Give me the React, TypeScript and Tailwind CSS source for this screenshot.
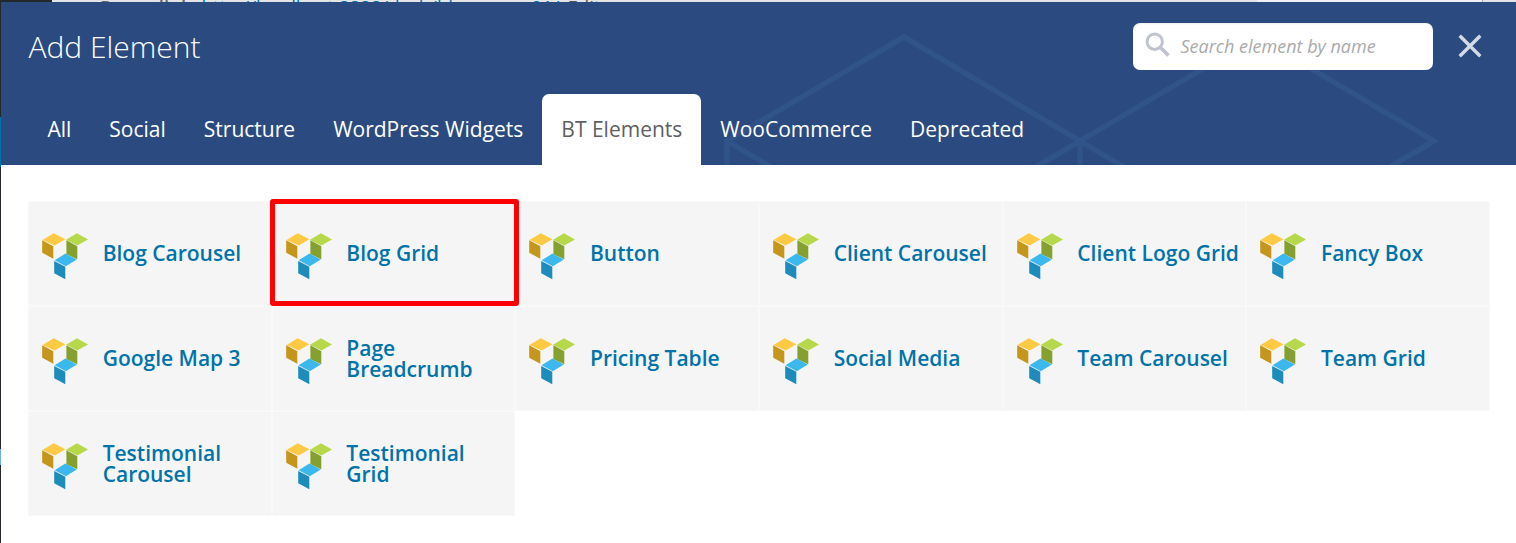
const names = [
  'Blog Carousel', 'Blog Grid', 'Button', 'Client Carousel', 'Client Logo Grid', 'Fancy Box',
  'Google Map 3', 'Page Breadcrumb', 'Pricing Table', 'Social Media', 'Team Carousel', 'Team Grid',
  'Testimonial Carousel', 'Testimonial Grid',
];

const tabs = ['All', 'Social', 'Structure', 'WordPress Widgets', 'BT Elements', 'WooCommerce', 'Deprecated'];

function Cubes() {
  return (
    <svg className="h-[48px] w-[48px] shrink-0" viewBox="0 0 48 48">
      <path fill="#ffca43" d="M12.7 1.3 24.4 7.3 13.7 13.6 1.5 7.9Z" />
      <path fill="#c4961b" d="M1.2 8.2 12.3 14.2V26.7L1.2 20.7Z" />
      <path fill="#b6d84a" d="M36 1.3 47 7.4 36.3 13.6 25.1 7.7Z" />
      <path fill="#85a02f" d="M25.4 8.3 36.3 14.2V27.3L25.4 22.3Z" />
      <path fill="#3bb8ee" d="M24.4 21.6 35.8 27.6 24.8 34.2 13.6 28.3Z" />
      <path fill="#1e8cba" d="M13.2 28.9 24.3 34.8V47.3L13.2 41.2Z" />
    </svg>
  );
}

export default function App() {
  return (
    <div className="relative h-[543px] w-[1516px] overflow-hidden bg-white pl-px font-['Open_Sans',sans-serif]">
      <div className="absolute left-0 top-0 flex h-[543px] w-px flex-col bg-[#23282d]">
        <div className="mt-[117px] h-[50px] bg-[#0073aa]" />
        <div className="mt-[282px] h-4 bg-[#72aee6]" />
      </div>
      <div className="flex h-0.5 overflow-hidden bg-[#e3e4e6]">
        <div className="h-0.5 w-[51px] bg-[#23282d]" />
        <div className="ml-[48px] w-[1157px] whitespace-nowrap text-[18.6px] leading-[20px] text-[#0073aa]">
          <div className="-mt-[3px]">
            <span className="font-semibold text-[#666]">Permalink:</span> http://localhost:8888/dash/blog-news-91/
            <span className="ml-2 text-[#555]">Edit</span>
          </div>
        </div>
        <div className="h-0.5 w-[226px] border-r border-[#aaa] bg-[#f0f1f3]" />
      </div>
      <header className="relative flex h-[163px] flex-col justify-between bg-[#2b4b80]">
        <svg className="absolute inset-0 h-full w-full" viewBox="1 2 1515 163" fill="none" stroke="#30538a" strokeWidth="5.5">
          <path d="M727 200V141L904 37 1080 141 904 245M727 141 820 196M1080 200V141L1257 37 1434 141 1342 195M1080 141 988 195M1080 141 1173 196" />
        </svg>
        <div className="relative flex items-start justify-between pl-[27.5px] pr-[34px]">
          <h1 className="mt-[22px] text-[30px] font-light leading-[46px] text-white">Add Element</h1>
          <div className="mt-[21px] flex items-center">
            <div className="flex h-[47px] w-[300px] items-center rounded-[7px] bg-white shadow-[inset_0_1px_2px_rgba(0,0,0,0.07)]">
              <svg className="ml-3 mb-[4px] h-[25px] w-[25px]" viewBox="0 0 25 25" fill="none" stroke="#bfc3cd" strokeWidth="3">
                <circle cx="9.7" cy="9.7" r="7.7" />
                <path d="m15.2 15.2 8.3 8.3" strokeWidth="3.6" />
              </svg>
              <span className="mb-[2px] ml-[10.5px] text-[18px] italic leading-6 text-[#aaa]">Search element by name</span>
            </div>
            <svg className="mb-[2px] ml-[25px] h-6 w-6" viewBox="0 0 24 24" fill="none" stroke="#d5dbe6" strokeWidth="3.4">
              <path d="m1.7 1.7 20.6 20.6M22.3 1.7 1.7 22.3" />
            </svg>
          </div>
        </div>
        <nav className="relative flex pl-[27.4px]">
          {tabs.map((t) => (
            <div
              key={t}
              className={`h-[71px] rounded-t-[7px] px-[19.02px] text-[21px] leading-[70px] whitespace-nowrap ${t === 'BT Elements' ? 'bg-white text-[#5f5f5f]' : 'text-white'}`}
            >
              {t}
            </div>
          ))}
        </nav>
      </header>
      <main className="ml-[27px] mt-9 grid w-[1462px] grid-cols-6">
        {names.map((n) => (
          <div
            key={n}
            className="relative flex h-[105px] items-center border border-[#f9f9f9] bg-[#f5f5f5] pl-[12px] pr-[5px]"
          >
            <div className="mt-[4px]"><Cubes /></div>
            <span className="ml-[13.65px] text-[21px] font-semibold leading-[21px] text-[#0073aa]">{n}</span>
            {n === 'Blog Grid' && (
              <div className="absolute -left-[3px] -top-[3px] z-10 h-[107px] w-[249px] rounded-[3px] border-[5px] border-[#ff0000]" />
            )}
          </div>
        ))}
      </main>
    </div>
  );
}
